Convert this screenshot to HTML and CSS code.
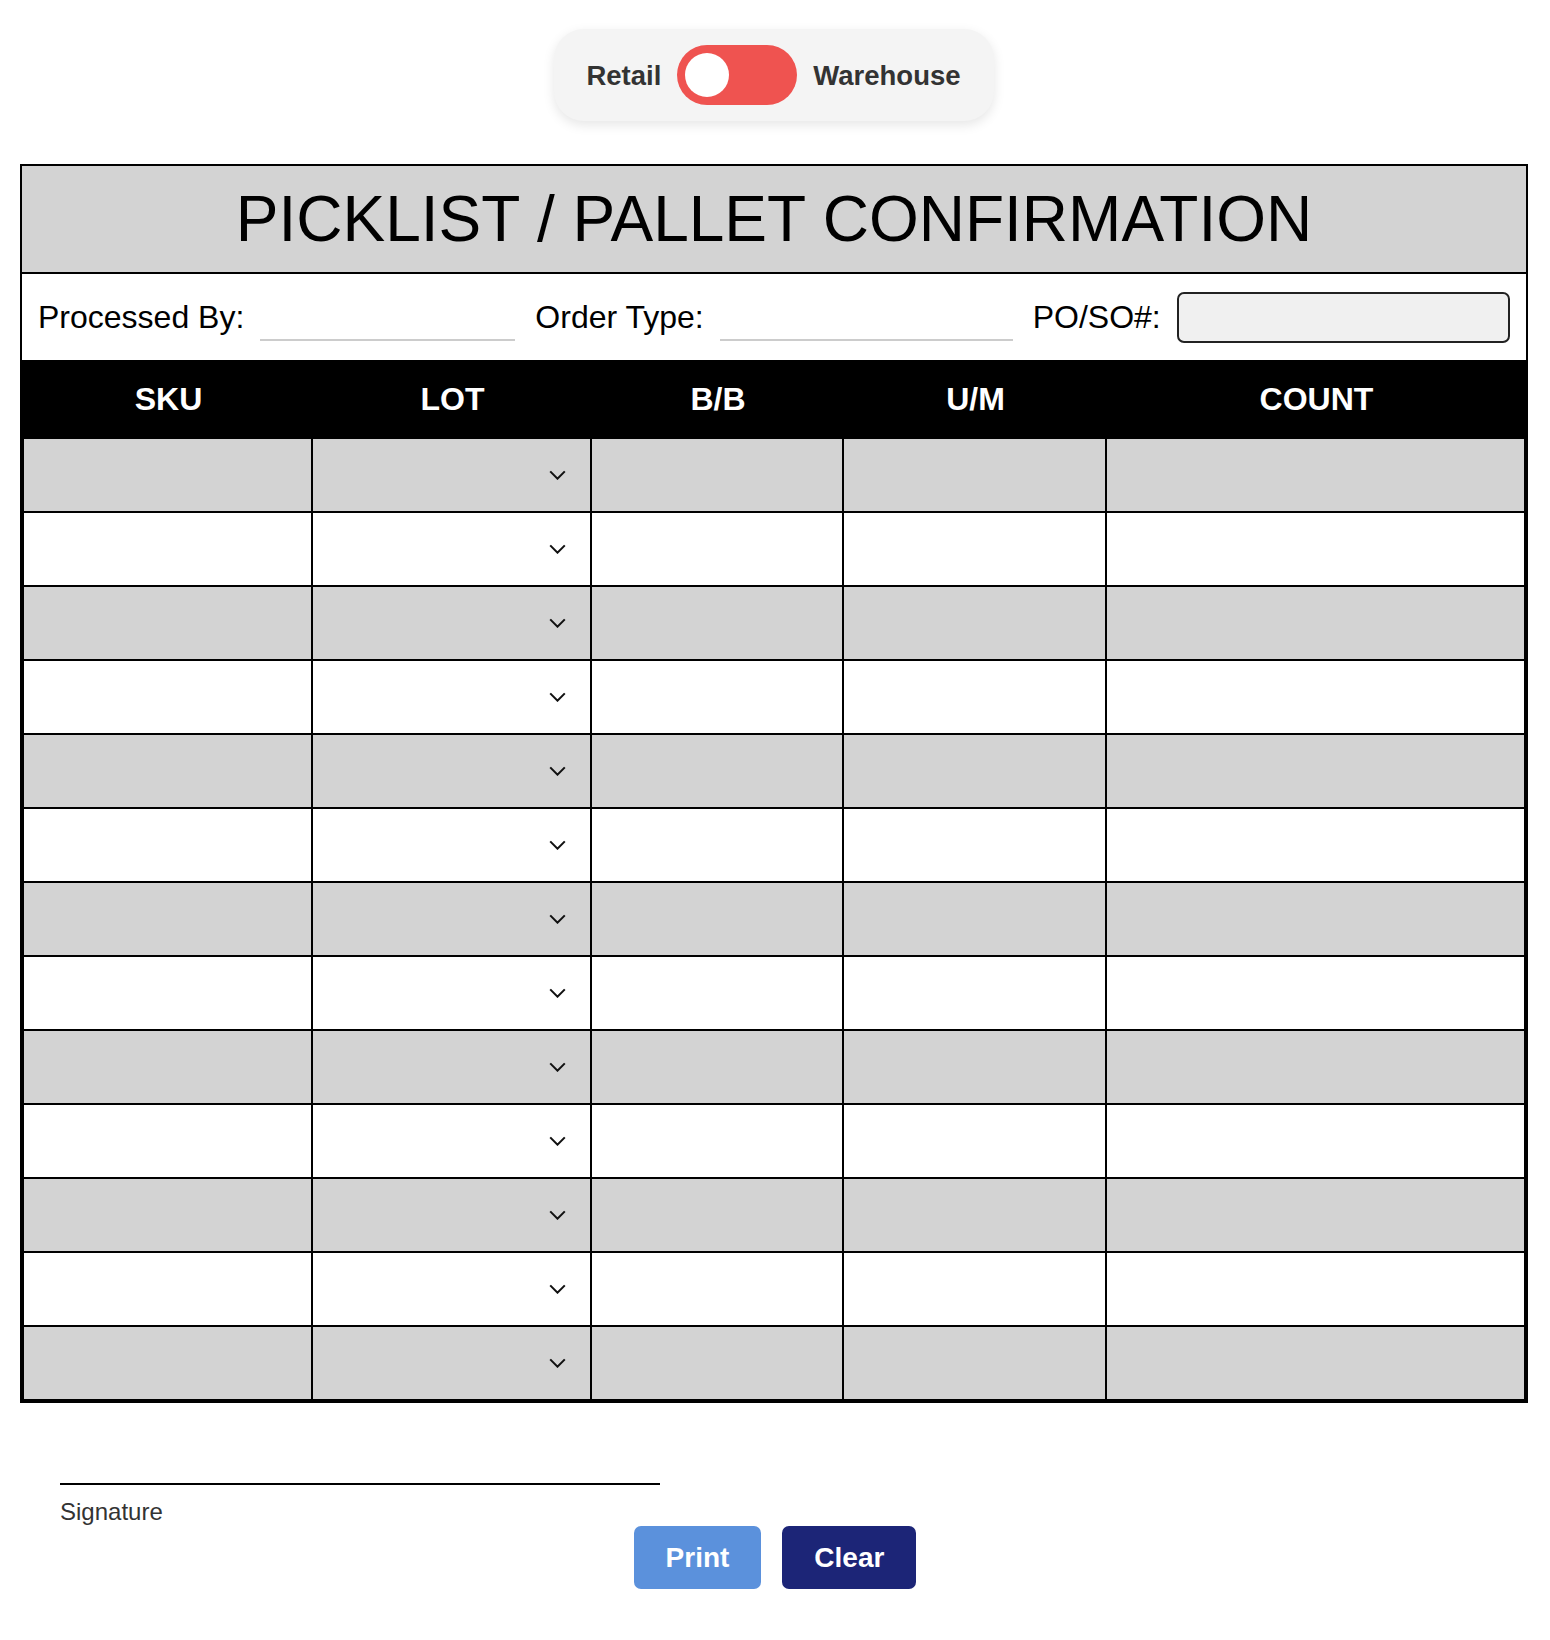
FILE: index.html
```html
<!DOCTYPE html>
<html lang="en">
<head>
<meta charset="utf-8">
<title>Picklist / Pallet Confirmation</title>
<link rel="stylesheet" href="styles.css">
</head>
<body>
<div class="page">
  <div class="toggle-wrap">
    <div class="toggle">
      <span class="toggle-label">Retail</span>
      <span class="switch"><span class="knob"></span></span>
      <span class="toggle-label">Warehouse</span>
    </div>
  </div>

  <div class="sheet">
    <div class="title">PICKLIST / PALLET CONFIRMATION</div>
    <div class="info">
      <div class="field"><span class="field-label">Processed By:</span><input class="line-input" type="text"></div>
      <div class="field"><span class="field-label">Order Type:</span><input class="line-input" type="text"></div>
      <div class="field"><span class="field-label">PO/SO#:</span><input class="box-input" type="text"></div>
    </div>
    <div class="head">
      <div>SKU</div><div>LOT</div><div>B/B</div><div>U/M</div><div>COUNT</div>
    </div>
    <div class="rows">
      <div class="row"><div class="cell"></div><div class="cell lot"><svg class="chev" viewBox="0 0 14 8"><path d="M1 1 L7 7 L13 1"/></svg></div><div class="cell"></div><div class="cell"></div><div class="cell"></div></div>
      <div class="row"><div class="cell"></div><div class="cell lot"><svg class="chev" viewBox="0 0 14 8"><path d="M1 1 L7 7 L13 1"/></svg></div><div class="cell"></div><div class="cell"></div><div class="cell"></div></div>
      <div class="row"><div class="cell"></div><div class="cell lot"><svg class="chev" viewBox="0 0 14 8"><path d="M1 1 L7 7 L13 1"/></svg></div><div class="cell"></div><div class="cell"></div><div class="cell"></div></div>
      <div class="row"><div class="cell"></div><div class="cell lot"><svg class="chev" viewBox="0 0 14 8"><path d="M1 1 L7 7 L13 1"/></svg></div><div class="cell"></div><div class="cell"></div><div class="cell"></div></div>
      <div class="row"><div class="cell"></div><div class="cell lot"><svg class="chev" viewBox="0 0 14 8"><path d="M1 1 L7 7 L13 1"/></svg></div><div class="cell"></div><div class="cell"></div><div class="cell"></div></div>
      <div class="row"><div class="cell"></div><div class="cell lot"><svg class="chev" viewBox="0 0 14 8"><path d="M1 1 L7 7 L13 1"/></svg></div><div class="cell"></div><div class="cell"></div><div class="cell"></div></div>
      <div class="row"><div class="cell"></div><div class="cell lot"><svg class="chev" viewBox="0 0 14 8"><path d="M1 1 L7 7 L13 1"/></svg></div><div class="cell"></div><div class="cell"></div><div class="cell"></div></div>
      <div class="row"><div class="cell"></div><div class="cell lot"><svg class="chev" viewBox="0 0 14 8"><path d="M1 1 L7 7 L13 1"/></svg></div><div class="cell"></div><div class="cell"></div><div class="cell"></div></div>
      <div class="row"><div class="cell"></div><div class="cell lot"><svg class="chev" viewBox="0 0 14 8"><path d="M1 1 L7 7 L13 1"/></svg></div><div class="cell"></div><div class="cell"></div><div class="cell"></div></div>
      <div class="row"><div class="cell"></div><div class="cell lot"><svg class="chev" viewBox="0 0 14 8"><path d="M1 1 L7 7 L13 1"/></svg></div><div class="cell"></div><div class="cell"></div><div class="cell"></div></div>
      <div class="row"><div class="cell"></div><div class="cell lot"><svg class="chev" viewBox="0 0 14 8"><path d="M1 1 L7 7 L13 1"/></svg></div><div class="cell"></div><div class="cell"></div><div class="cell"></div></div>
      <div class="row"><div class="cell"></div><div class="cell lot"><svg class="chev" viewBox="0 0 14 8"><path d="M1 1 L7 7 L13 1"/></svg></div><div class="cell"></div><div class="cell"></div><div class="cell"></div></div>
      <div class="row"><div class="cell"></div><div class="cell lot"><svg class="chev" viewBox="0 0 14 8"><path d="M1 1 L7 7 L13 1"/></svg></div><div class="cell"></div><div class="cell"></div><div class="cell"></div></div>
    </div>
  </div>

  <div class="signature">
    <div class="sig-line"></div>
    <div class="sig-label">Signature</div>
  </div>

  <div class="actions">
    <button class="btn btn-print" type="button">Print</button>
    <button class="btn btn-clear" type="button">Clear</button>
  </div>
</div>
</body>
</html>
```

FILE: styles.css
```css
* { box-sizing: border-box; }

html, body {
  margin: 0;
  padding: 0;
  background: #ffffff;
}

body {
  font-family: "Liberation Sans", Arial, Helvetica, sans-serif;
  color: #000;
}

.page {
  padding: 29px 22px 40px 20px;
}

/* Toggle */
.toggle-wrap {
  display: flex;
  justify-content: center;
}

.toggle {
  display: flex;
  align-items: center;
  gap: 16px;
  padding: 16px 33px 16px 32px;
  background: #f4f4f4;
  border-radius: 30px;
  box-shadow: 0 4px 12px rgba(0, 0, 0, 0.10);
}

.toggle-label {
  font-size: 27.5px;
  font-weight: bold;
  color: #333333;
  line-height: 32px;
  position: relative;
  top: 1px;
}

.switch {
  display: flex;
  align-items: center;
  width: 120px;
  height: 60px;
  padding: 0 8px;
  border-radius: 30px;
  background: #ef5350;
}

.knob {
  width: 44px;
  height: 44px;
  border-radius: 50%;
  background: #ffffff;
}

/* Sheet */
.sheet {
  margin-top: 43px;
  border: 2px solid #000;
}

.title {
  height: 108px;
  border-bottom: 2px solid #000;
  background: #d3d3d3;
  display: flex;
  align-items: center;
  justify-content: center;
  font-size: 64px;
  line-height: 1;
  color: #000;
}

.info {
  height: 86px;
  display: flex;
  align-items: center;
  gap: 20px;
  padding: 0 16px;
}

.field {
  flex: 1;
  display: flex;
  align-items: center;
  gap: 16px;
}

.field-label {
  font-size: 32px;
  white-space: nowrap;
}

.line-input {
  flex: 1;
  min-width: 0;
  height: 48px;
  border: none;
  border-bottom: 2px solid #cccccc;
  background: transparent;
  font: inherit;
  outline: none;
}

.box-input {
  flex: 1;
  min-width: 0;
  height: 51px;
  border: 2px solid #222;
  border-radius: 7px;
  background: #f0f0f0;
  font: inherit;
  outline: none;
}

.head,
.row {
  display: grid;
  grid-template-columns: 289fr 279fr 252fr 263fr 419fr;
}

.head {
  height: 79px;
  background: #000;
  color: #fff;
  font-size: 32px;
  font-weight: bold;
  align-items: center;
  text-align: center;
  padding-left: 2px;
}

.rows {
  border-left: 2px solid #000;
}

.row {
  height: 74px;
}

.row:nth-child(odd) {
  background: #d3d3d3;
}

.row:nth-child(even) {
  background: #ffffff;
}

.cell {
  border-right: 2px solid #000;
  border-bottom: 2px solid #000;
}

.lot {
  display: flex;
  align-items: center;
  justify-content: flex-end;
  padding-right: 24px;
}

.chev {
  width: 17px;
  height: 10px;
  fill: none;
  stroke: #111;
  stroke-width: 1.7;
}

/* Signature */
.signature {
  margin: 80px 0 0 40px;
  width: 600px;
}

.sig-line {
  border-top: 2px solid #000;
}

.sig-label {
  margin-top: 13px;
  font-size: 24px;
  line-height: 28px;
  color: #333333;
}

.actions {
  display: flex;
  justify-content: center;
  gap: 21px;
  margin-top: 0;
  padding-left: 2px;
}

.btn {
  height: 63px;
  padding: 0 32px;
  border: none;
  border-radius: 7px;
  font-family: "Liberation Sans", Arial, Helvetica, sans-serif;
  font-size: 28px;
  font-weight: bold;
  color: #ffffff;
}

.btn-print {
  background: #5b91dc;
}

.btn-clear {
  background: #1c2577;
}
```
